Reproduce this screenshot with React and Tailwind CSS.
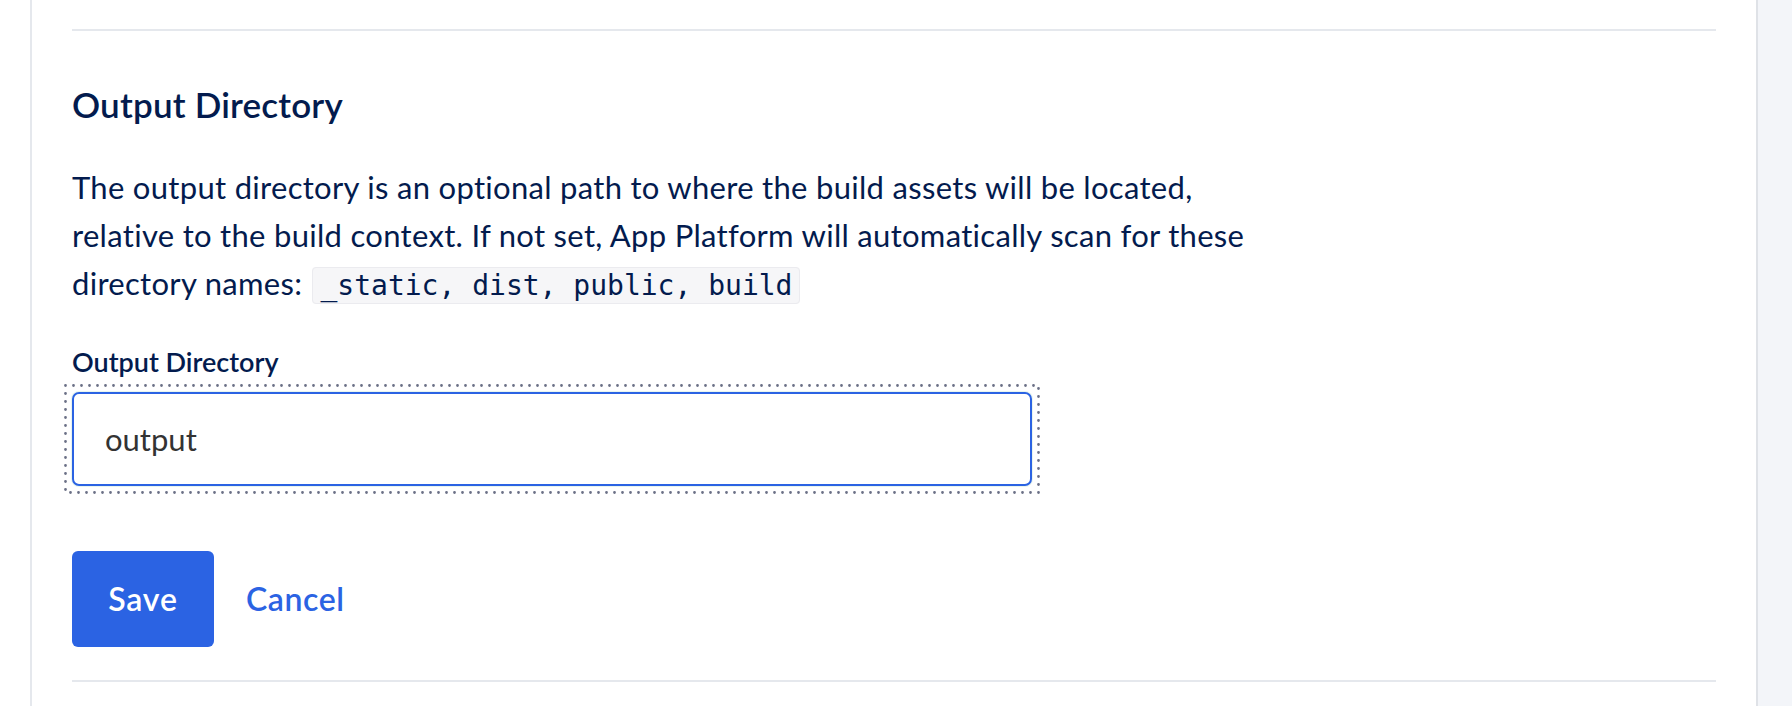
import React from "react";

// FocusRing - dotted keyboard-focus ring drawn round the text field
const FocusRing = () => (
  <svg className="pointer-events-none absolute -left-[8px] -top-[8px]" width="976" height="110" viewBox="0 0 976 110">
    <rect
      x="1.5"
      y="1.5"
      width="973"
      height="107"
      fill="none"
      stroke="#6b7086"
      strokeWidth="2.8"
      strokeLinecap="round"
      strokeDasharray="0 8"
    />
  </svg>
);

// OutputDirectorySettings - App Platform build setting: output directory field with save / cancel
const App = () => {
  return (
    <div className="flex min-h-[706px] w-full bg-white font-['Lato','Noto_Sans',sans-serif] text-[#031b4e]">
      <div className="w-[30px] shrink-0 bg-white" />
      <div className="flex-1 border-x-2 border-l-[#e5e8ed] border-r-[#dfe2e7] bg-white px-[40px] pt-[29px]">
        <div className="h-[2px] bg-[#e5e8ed]" />

        <h3 className="mt-[53px] text-[35px] leading-[40px] font-semibold tracking-[0.2px]">Output Directory</h3>

        <p className="mt-[39px] text-[31px] leading-[48px] tracking-[0.3px]">
          The output directory is an optional path to where the build assets will be located,
          <br />
          relative to the build context. If not set, App Platform will automatically scan for these
          <br />
          directory names:{" "}
          <code className="ml-[2px] rounded-[4px] border border-[#ebebef] bg-[#f6f6f8] px-[7px] py-px font-['DejaVu_Sans_Mono',monospace] text-[28px] leading-[32px] tracking-normal">
            _static, dist, public, build
          </code>
        </p>

        <label className="mt-[39px] block text-[27px] leading-[32px] font-semibold">Output Directory</label>
        <div className="relative mt-[14px] w-[960px]">
          <input
            type="text"
            defaultValue="output"
            className="h-[94px] w-full rounded-[7px] border-2 border-[#2b63e3] bg-white px-[31px] text-[31px] text-[#333333] outline-none shadow-[0_0_0_1px_#e8f5ee]"
          />
          <FocusRing />
        </div>

        <div className="mt-[65px] flex items-center">
          <button className="h-[96px] w-[142px] rounded-[6px] bg-[#2b63e3] text-[32px] font-semibold tracking-[0.8px] text-white">
            Save
          </button>
          <button className="ml-[32px] text-[32px] font-semibold tracking-[0.6px] text-[#2b63e3]">Cancel</button>
        </div>

        <div className="mt-[33px] h-[2px] bg-[#e5e8ed]" />
      </div>
      <div className="w-[34px] shrink-0 bg-[#f3f5f9]" />
    </div>
  );
};

export default App;
